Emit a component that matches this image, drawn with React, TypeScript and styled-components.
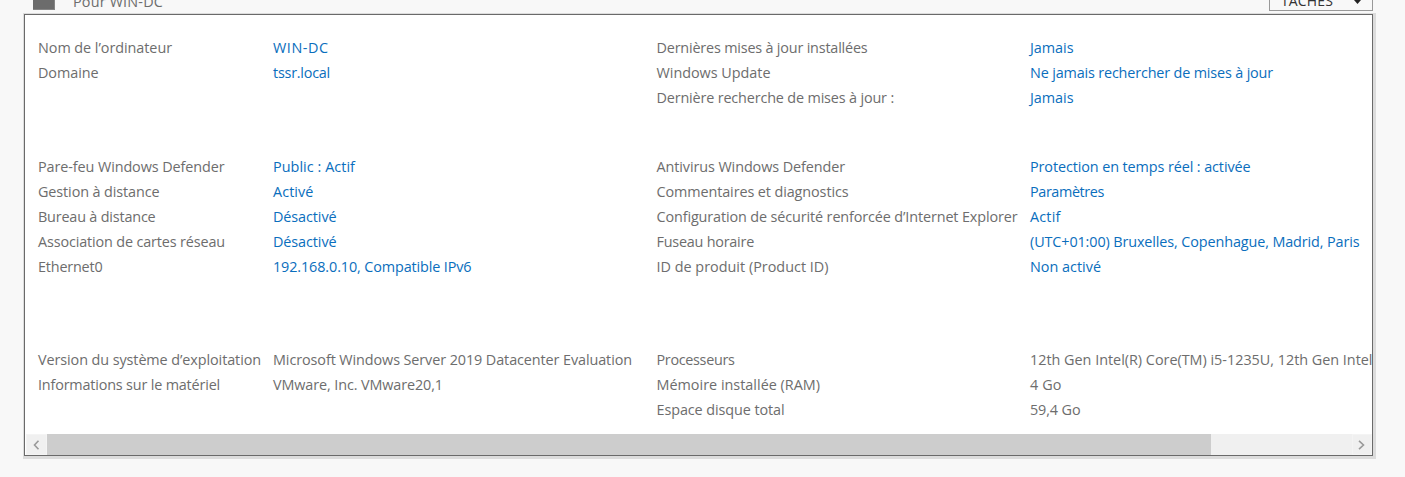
import React, { useLayoutEffect, useRef, useState } from "react";
import styled, { createGlobalStyle } from "styled-components";

const GlobalStyle = createGlobalStyle`
  * { box-sizing: border-box; }
  html, body { margin: 0; padding: 0; background: #f8f8f8; overflow: hidden; }
  body { font-family: "Segoe UI", "Open Sans", "Noto Sans", sans-serif; font-size: 14.4px; color: #6d6d6d; }
`;

const Page = styled.main`
  width: 1405px;
  height: 477px;
  overflow: hidden;
  display: flex;
  flex-direction: column;
  padding-left: 23px;
`;

const Header = styled.header`
  height: 13px;
  width: 1350px;
  flex: none;
  display: flex;
  align-items: flex-start;
  padding-left: 10px;
`;

const TileIcon = styled.div`
  width: 22px;
  height: 10px;
  margin-right: 18px;
  background: #6c6c6c;
  border: solid #858585;
  border-width: 0 1px 1px 0;
`;

const Subtitle = styled.div`
  height: 20px;
  line-height: 20px;
  margin-top: -8px;
`;

const TasksButton = styled.button`
  margin: -11px 0 0 auto;
  width: 104px;
  height: 22px;
  padding: 2px 11px 0 11px;
  display: flex;
  align-items: center;
  justify-content: space-between;
  border: 1px solid #999;
  background: #f8f8f8;
  color: #333;
  font: inherit;
  font-size: 14px;
  line-height: 20px;
`;

const Caret = styled.svg`
  width: 7px;
  height: 4px;
  margin-top: 1px;
  fill: #222;
`;

const Frame = styled.section`
  width: 1353px;
  height: 446px;
  flex: none;
  padding: 1px 3px 3px 1px;
  background: #dcdcdc;
`;

const Panel = styled.div`
  width: 1349px;
  height: 442px;
  border: 1px solid #6a6a6a;
  background: #fff;
  overflow: hidden;
  display: flex;
  flex-direction: column;
`;

const Content = styled.div`
  flex: 1;
  padding: 20px 0 0 13px;
  display: flex;
  flex-direction: column;
  overflow: hidden;
`;

const Group = styled.div<{ $gap: number }>`
  display: grid;
  grid-template-columns: 235px 383.5px 373.5px 342px;
  grid-auto-rows: 25px;
  margin-bottom: ${(p) => p.$gap}px;
`;

const Cell = styled.div<{ $link?: boolean }>`
  line-height: 25px;
  white-space: nowrap;
  color: ${(p) => (p.$link ? "#0a6ebd" : "inherit")};
`;

const Run = styled.span`
  display: inline-block;
  white-space: nowrap;
`;

const ScrollBar = styled.div`
  height: 21px;
  flex: none;
  margin-left: 1px;
  display: flex;
  background: #f0f0f0;
`;

const ScrollButton = styled.div<{ $end?: boolean }>`
  width: ${(p) => (p.$end ? 20 : 21)}px;
  margin-left: ${(p) => (p.$end ? "auto" : "0")};
  padding-right: 1px;
  display: flex;
  align-items: center;
  justify-content: center;
  background: #f0f0f0;
  border: 1px solid #f4f4f4;
`;

const Thumb = styled.div`
  width: 1164px;
  background: #cdcdcd;
`;

const Chevron = styled.svg`
  width: 7px;
  height: 10px;
  fill: none;
  stroke: #999;
  stroke-width: 1.6;
`;

function Fit({ text, width }: { text: string; width: number }) {
  const ref = useRef<HTMLSpanElement>(null);
  const [spacing, setSpacing] = useState(0);
  useLayoutEffect(() => {
    if (ref.current) {
      const natural = ref.current.getBoundingClientRect().width;
      setSpacing((width - natural) / text.length);
    }
  }, [text, width]);
  return (
    <Run ref={ref} style={{ letterSpacing: spacing }}>
      {text}
    </Run>
  );
}

type Item = [text: string, width: number, link?: boolean];

const groups: { gap: number; items: (Item | null)[] }[] = [
  {
    gap: 44,
    items: [
      ["Nom de l’ordinateur", 134], ["WIN-DC", 55.5, true],
      ["Dernières mises à jour installées", 211], ["Jamais", 43.5, true],
      ["Domaine", 60.5], ["tssr.local", 57, true],
      ["Windows Update", 114], ["Ne jamais rechercher de mises à jour", 243, true],
      null, null,
      ["Dernière recherche de mises à jour :", 237.5], ["Jamais", 43.5, true],
    ],
  },
  {
    gap: 68,
    items: [
      ["Pare-feu Windows Defender", 186.5], ["Public : Actif", 82, true],
      ["Antivirus Windows Defender", 188.5], ["Protection en temps réel : activée", 220.5, true],
      ["Gestion à distance", 121.5], ["Activé", 40.5, true],
      ["Commentaires et diagnostics", 192], ["Paramètres", 74, true],
      ["Bureau à distance", 117.5], ["Désactivé", 63.5, true],
      ["Configuration de sécurité renforcée d’Internet Explorer", 361], ["Actif", 30.5, true],
      ["Association de cartes réseau", 187], ["Désactivé", 63.5, true],
      ["Fuseau horaire", 97.5], ["(UTC+01:00) Bruxelles, Copenhague, Madrid, Paris", 329.5, true],
      ["Ethernet0", 64.5], ["192.168.0.10, Compatible IPv6", 198.5, true],
      ["ID de produit (Product ID)", 172], ["Non activé", 71, true],
    ],
  },
  {
    gap: 0,
    items: [
      ["Version du système d’exploitation", 223], ["Microsoft Windows Server 2019 Datacenter Evaluation", 359],
      ["Processeurs", 78], ["12th Gen Intel(R) Core(TM) i5-1235U, 12th Gen Intel", 342.5],
      ["Informations sur le matériel", 182], ["VMware, Inc. VMware20,1", 170],
      ["Mémoire installée (RAM)", 163.5], ["4 Go", 31.5],
      null, null,
      ["Espace disque total", 128], ["59,4 Go", 50.5],
    ],
  },
];

export default function App() {
  return (
    <Page>
      <GlobalStyle />
      <Header>
        <TileIcon />
        <Subtitle><Fit text="Pour WIN-DC" width={90} /></Subtitle>
        <TasksButton>
          <Fit text="TÂCHES" width={52} />
          <Caret viewBox="0 0 7 4"><path d="M0 0h7L3.5 4z" /></Caret>
        </TasksButton>
      </Header>
      <Frame>
        <Panel>
          <Content>
            {groups.map((group, g) => (
              <Group key={g} $gap={group.gap}>
                {group.items.map((item, i) => (
                  <Cell key={i} $link={item?.[2]}>
                    {item && <Fit text={item[0]} width={item[1]} />}
                  </Cell>
                ))}
              </Group>
            ))}
          </Content>
          <ScrollBar>
            <ScrollButton><Chevron viewBox="0 0 7 10"><path d="M5.5 0.8L1.5 5l4 4.2" /></Chevron></ScrollButton>
            <Thumb />
            <ScrollButton $end><Chevron viewBox="0 0 7 10"><path d="M1 0.8L5.5 5L1 9.2" /></Chevron></ScrollButton>
          </ScrollBar>
        </Panel>
      </Frame>
    </Page>
  );
}
